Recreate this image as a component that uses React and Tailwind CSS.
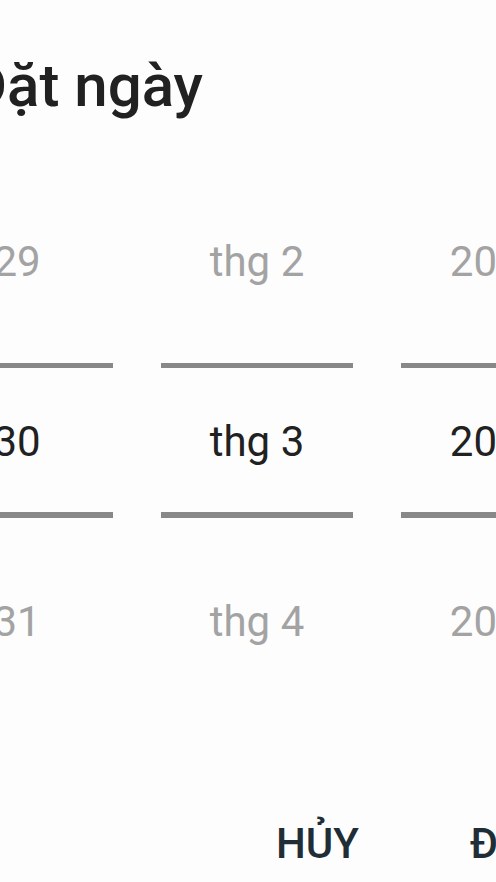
export default function App() {
  const cols = [
    { a: "29", b: "30", c: "31" },
    { a: "thg 2", b: "thg 3", c: "thg 4" },
    { a: "2023", b: "2024", c: "2025" },
  ];
  return (
    <div
      className="w-[496px] h-[882px] overflow-hidden bg-[#fdfdfd] relative"
      style={{ fontFamily: "Roboto, 'Noto Sans', sans-serif" }}
    >
      <div className="pt-[46px] -ml-[33px] h-[172px]">
        <div className="text-[60px] leading-[80px] font-medium text-[#212121] whitespace-nowrap">
          Đặt ngày
        </div>
      </div>
      <div className="flex gap-[48px] -ml-[79px]">
        {cols.map((c, i) => (
          <div key={i} className="w-[192px] shrink-0 flex flex-col">
            <div className="h-[180px] flex items-center justify-center text-[42px] leading-none text-[#a3a3a3] whitespace-nowrap">
              {c.a}
            </div>
            <div className="h-[11px]" />
            <div className="h-[5px] bg-[#888888]" />
            <div className="h-[144px] pt-[4px] flex items-center justify-center text-[42px] leading-none text-[#212121] whitespace-nowrap">
              {c.b}
            </div>
            <div className="h-[6px] bg-[#888888]" />
            <div className="h-[208px] flex items-center justify-center text-[42px] leading-none text-[#a3a3a3] whitespace-nowrap">
              {c.c}
            </div>
          </div>
        ))}
      </div>
      <div className="flex mt-[97px] pl-[276px] gap-[111px] text-[42px] leading-none font-medium text-[#1f2d36] whitespace-nowrap">
        <div>HỦY</div>
        <div>ĐẶT</div>
      </div>
    </div>
  );
}
